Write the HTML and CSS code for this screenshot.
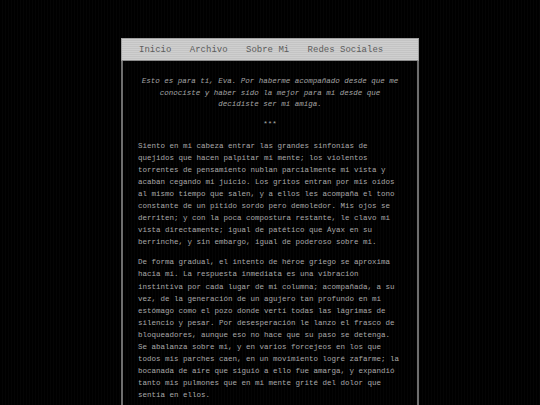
FILE: index.html
```html
<!DOCTYPE html>
<html lang="es">
<head>
<meta charset="utf-8">
<title>Para Eva</title>
<link rel="stylesheet" href="styles.css">
</head>
<body>
<div class="page">
  <nav class="nav">
    <a href="#">Inicio</a>
    <a href="#">Archivo</a>
    <a href="#">Sobre Mi</a>
    <a href="#">Redes Sociales</a>
  </nav>
  <main class="content">
    <p class="dedication">Esto es para ti, Eva. Por haberme acompañado desde que me conociste y haber sido la mejor para mi desde que decidiste ser mi amiga.</p>
    <p class="stars">***</p>
    <p class="text">Siento en mi cabeza entrar las grandes sinfonías de quejidos que hacen palpitar mi mente; los violentos torrentes de pensamiento nublan parcialmente mi vista y acaban cegando mi juicio. Los gritos entran por mis oídos al mismo tiempo que salen, y a ellos les acompaña el tono constante de un pitido sordo pero demoledor. Mis ojos se derriten; y con la poca compostura restante, le clavo mi vista directamente; igual de patético que Áyax en su berrinche, y sin embargo, igual de poderoso sobre mi.</p>
    <p class="text">De forma gradual, el intento de héroe griego se aproxima hacia mí. La respuesta inmediata es una vibración instintiva por cada lugar de mi columna; acompañada, a su vez, de la generación de un agujero tan profundo en mi estómago como el pozo donde vertí todas las lágrimas de silencio y pesar. Por desesperación le lanzo el frasco de bloqueadores, aunque eso no hace que su paso se detenga. Se abalanza sobre mi, y en varios forcejeos en los que todos mis parches caen, en un movimiento logré zafarme; la bocanada de aire que siguió a ello fue amarga, y expandió tanto mis pulmones que en mi mente grité del dolor que sentía en ellos.</p>
  </main>
</div>
</body>
</html>
```
FILE: styles.css
```css
html, body {
  margin: 0;
  padding: 0;
}
body {
  background-color: #000;
  background-image: repeating-linear-gradient(90deg, #000 0, #000 2px, #050505 2px, #050505 3px);
  font-family: "Liberation Mono", "DejaVu Sans Mono", monospace;
  min-height: 405px;
}
.page {
  width: 298px;
  margin: 38px auto 0;
}
.nav {
  display: flex;
  gap: 18.4px;
  height: 20px;
  align-items: center;
  padding: 1px 17px 0;
  border: 1px solid #a0a0a0;
  border-bottom-color: #8a8a8a;
  background-color: #c9c9c9;
  background-image: repeating-linear-gradient(180deg, #cfcfcf 0, #cfcfcf 1px, #c4c4c4 1px, #c4c4c4 2px);
  font-size: 9px;
}
.nav a {
  color: #5c5c5c;
  text-decoration: none;
}
.content {
  border-left: 2px solid #6e6e6e;
  border-right: 2px solid #6e6e6e;
  padding: 15px 15px 20px 15px;
  color: #a8a8a8;
  font-size: 7.5px;
}
.content p {
  margin: 0;
}
.dedication {
  font-style: italic;
  text-align: center;
  line-height: 11.5px;
  color: #a2a2a2;
}
.stars {
  text-align: center;
  line-height: 12px;
  margin-top: 7px !important;
  margin-bottom: 10px !important;
}
.text {
  line-height: 12.1px;
  margin-bottom: 8px !important;
}
```
